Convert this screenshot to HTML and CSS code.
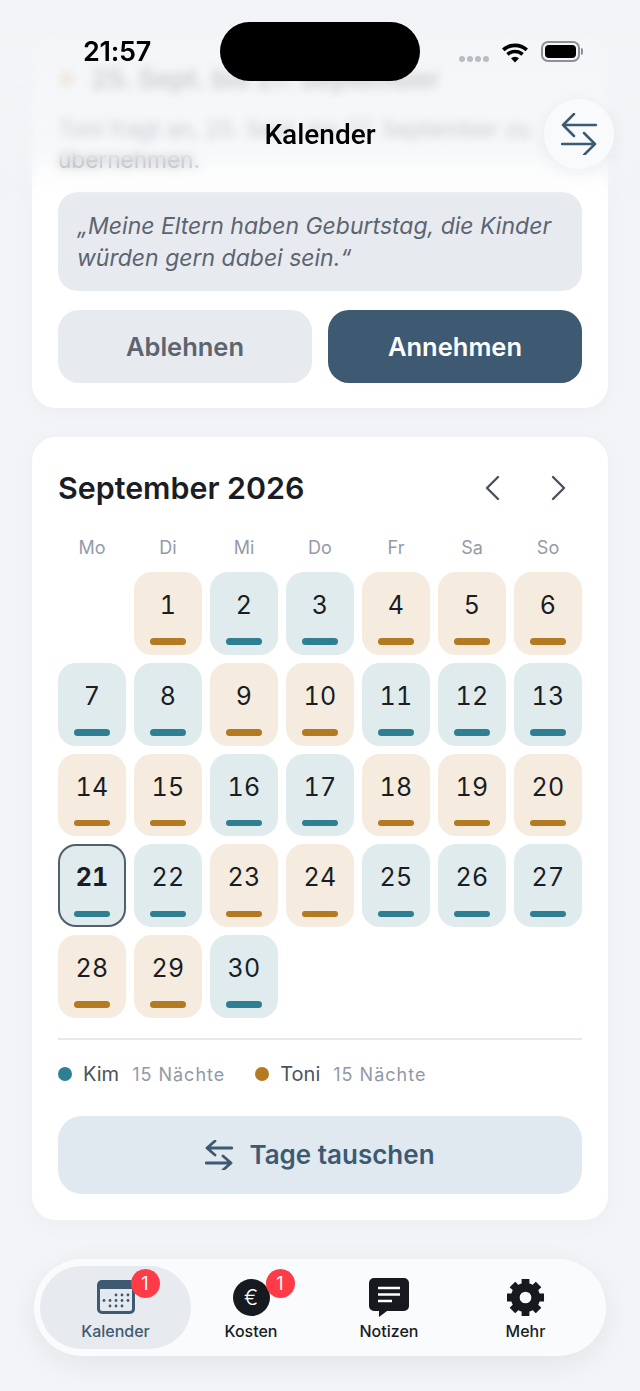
FILE: index.html
```html
<!DOCTYPE html>
<html lang="de">
<head>
<meta charset="utf-8">
<title>Kalender</title>
<link rel="stylesheet" href="styles.css">
</head>
<body>
<main class="page">
  <section class="card request">
    <h2 class="req-title"><span class="req-dot"></span>25. Sept. bis 27. September</h2>
    <p class="req-text">Toni fragt an, 25. Sept. bis 27. September zu übernehmen.</p>
    <blockquote class="quote">„Meine Eltern haben Geburtstag, die Kinder würden gern dabei sein.“</blockquote>
    <div class="actions">
      <button class="btn btn-muted">Ablehnen</button>
      <button class="btn btn-primary">Annehmen</button>
    </div>
  </section>

  <section class="card calendar">
    <header class="cal-head">
      <h1 class="cal-title">September 2026</h1>
      <div class="cal-nav">
        <svg width="18" height="26" viewBox="0 0 18 26"><path d="M15 2 4 13l11 11" class="chev"/></svg>
        <svg width="18" height="26" viewBox="0 0 18 26"><path d="M3 2l11 11L3 24" class="chev"/></svg>
      </div>
    </header>
    <div class="grid weekdays">
      <span>Mo</span><span>Di</span><span>Mi</span><span>Do</span><span>Fr</span><span>Sa</span><span>So</span>
    </div>
    <div class="grid days">
      <span></span>
      <div class="day toni">1</div><div class="day kim">2</div><div class="day kim">3</div><div class="day toni">4</div><div class="day toni">5</div><div class="day toni">6</div>
      <div class="day kim">7</div><div class="day kim">8</div><div class="day toni">9</div><div class="day toni">10</div><div class="day kim">11</div><div class="day kim">12</div><div class="day kim">13</div>
      <div class="day toni">14</div><div class="day toni">15</div><div class="day kim">16</div><div class="day kim">17</div><div class="day toni">18</div><div class="day toni">19</div><div class="day toni">20</div>
      <div class="day kim today">21</div><div class="day kim">22</div><div class="day toni">23</div><div class="day toni">24</div><div class="day kim">25</div><div class="day kim">26</div><div class="day kim">27</div>
      <div class="day toni">28</div><div class="day toni">29</div><div class="day kim">30</div>
    </div>
    <div class="legend">
      <span class="legend-dot kim-dot"></span><span class="legend-name">Kim</span><span class="legend-count">15 Nächte</span>
      <span class="legend-dot toni-dot second"></span><span class="legend-name">Toni</span><span class="legend-count">15 Nächte</span>
    </div>
    <button class="swap-btn">
      <svg class="swap-icon" width="28" height="30" viewBox="0 0 28 30"><path d="M2 8h25M10 1 2 8l8 7M26 23H1M18 16l8 7-8 7" class="swap-path"/></svg>
      Tage tauschen
    </button>
  </section>
</main>

<div class="top-fade"></div>

<div class="statusbar">
  <span class="time">21:57</span>
  <span class="island"></span>
  <span class="signal"><i></i><i></i><i></i><i></i></span>
  <svg class="wifi" width="26" height="20" viewBox="0 0 26 20"><path d="M13 19.5 9 15.2a6 6 0 0 1 8 0zM6.6 12.7 4.2 10.1a13 13 0 0 1 17.6 0l-2.4 2.6a9.5 9.5 0 0 0-12.8 0zM2.5 8.3 0 5.6a19 19 0 0 1 26 0l-2.5 2.7a15.4 15.4 0 0 0-21 0z"/></svg>
  <span class="battery"><span class="battery-fill"></span></span>
</div>

<div class="titlebar">Kalender</div>
<button class="float-swap" aria-label="Tauschen">
  <svg width="36" height="42" viewBox="0 0 36 42"><path d="M2 12h33M13 1 2 12l11 11M34 31H1M23 20l11 11-11 11" class="swap-path thin"/></svg>
</button>

<nav class="tabbar">
  <a class="tab active">
    <span class="tab-icon">
      <svg width="38" height="34" viewBox="0 0 38 34">
        <rect x="1.5" y="1.5" width="35" height="31" rx="3.5" fill="#e3e9ef" stroke="#3e5a72" stroke-width="3"/>
        <path d="M1.500 5a3.500 3.500 0 0 1 3.500-3.500h28a3.500 3.500 0 0 1 3.500 3.500v4h-35z" fill="#3e5a72"/>
        <g fill="#3e5a72">
          <circle cx="19" cy="15" r="1.400"/><circle cx="25" cy="15" r="1.400"/><circle cx="31" cy="15" r="1.400"/>
          <circle cx="7" cy="20.500" r="1.400"/><circle cx="13" cy="20.500" r="1.400"/><circle cx="19" cy="20.500" r="1.400"/><circle cx="25" cy="20.500" r="1.400"/><circle cx="31" cy="20.500" r="1.400"/>
          <circle cx="13" cy="26" r="1.400"/><circle cx="19" cy="26" r="1.400"/><circle cx="25" cy="26" r="1.400"/>
        </g>
      </svg>
      <b class="badge">1</b>
    </span>
    <span class="tab-label">Kalender</span>
  </a>
  <a class="tab">
    <span class="tab-icon"><span class="euro">€</span><b class="badge">1</b></span>
    <span class="tab-label">Kosten</span>
  </a>
  <a class="tab">
    <span class="tab-icon">
      <svg width="40" height="39" viewBox="0 0 40 39">
        <path d="M5 0h30a5 5 0 0 1 5 5v23a5 5 0 0 1-5 5H18l-8 6v-6H5a5 5 0 0 1-5-5V5a5 5 0 0 1 5-5z" fill="#16191d"/>
        <path d="M9 10h22M9 16.500h22M9 23h14" stroke="#fff" stroke-width="2.600" fill="none"/>
      </svg>
    </span>
    <span class="tab-label">Notizen</span>
  </a>
  <a class="tab">
    <span class="tab-icon">
      <svg width="39" height="39" viewBox="0 0 40 40">
        <circle cx="20" cy="20" r="10.500" fill="none" stroke="#16191d" stroke-width="9"/>
        <g stroke="#16191d" stroke-width="8" stroke-linecap="butt">
          <path d="M20 1v38M1 20h38M6.600 6.600l26.800 26.800M33.400 6.600 6.600 33.400" stroke-dasharray="6 26 6"/>
        </g>
      </svg>
    </span>
    <span class="tab-label">Mehr</span>
  </a>
</nav>
</body>
</html>
```
FILE: styles.css
```css
* { box-sizing: border-box; }
html, body { margin: 0; height: 1391px; overflow: hidden; }
body {
  background: #f2f4f7;
  font-family: Inter, "Liberation Sans", sans-serif;
  color: #1a1d23;
  position: relative;
}
.page { display: flex; flex-direction: column; gap: 29px; padding: 37px 32px 0; }
.card {
  background: #fff;
  border-radius: 24px;
  padding: 26px;
  box-shadow: 0 4px 24px rgba(30, 40, 60, 0.03);
}
.request { height: 371px; }
.req-title {
  display: flex; align-items: center; gap: 18px;
  margin: 0 0 20px 2px; font-size: 26.5px; line-height: 30px; font-weight: 600; color: #20242b;
}
.req-dot { width: 13px; height: 13px; border-radius: 50%; background: #d29a45; }
.req-text { margin: 0 0 17px; font-size: 22.600px; line-height: 31px; color: #5d6470; }
.quote {
  margin: 0 0 19px; padding: 18px 19px; height: 99px;
  background: #e7ebef; border-radius: 20px;
  font-size: 23px; line-height: 32px; font-style: italic; color: #5d6470;
}
.actions { display: flex; gap: 16px; }
.btn {
  flex: 1; height: 73px; border: 0; border-radius: 21px;
  font: 600 25.500px Inter, sans-serif;
}
.btn-muted { background: #e7ebef; color: #5d6470; }
.btn-primary { background: #3e5a72; color: #fff; }

.calendar { height: 783px; padding-top: 30px; }
.cal-head { display: flex; justify-content: space-between; align-items: center; height: 42px; }
.cal-title { margin: 0; font-size: 30.400px; line-height: 42px; font-weight: 600; color: #1a1d23; }
.cal-nav { display: flex; gap: 49px; margin-right: 14px; }
.chev { fill: none; stroke: #4a5260; stroke-width: 2.4; stroke-linecap: round; stroke-linejoin: round; }
.grid { display: grid; grid-template-columns: repeat(7, 68px); column-gap: 8px; }
.weekdays {
  margin-top: 26px; height: 26px; line-height: 26px; text-align: center;
  font-size: 18px; font-weight: 400; color: #949ba8;
}
.days { margin-top: 11px; grid-auto-rows: 82.750px; row-gap: 8px; }
.day {
  position: relative; border-radius: 18px;
  padding-top: 17px; text-align: center;
  font-size: 25px; line-height: 32px; font-weight: 400; color: #1a1d23;
  font-variant-numeric: tabular-nums; letter-spacing: 0.2px;
}
.day::after {
  content: ""; position: absolute; left: 16px; right: 16px; bottom: 10px;
  height: 6.500px; border-radius: 4px;
}
.kim { background: #e0ebee; }
.kim::after { background: #2f7f93; }
.toni { background: #f5ecdf; }
.toni::after { background: #b47a22; }
.today { font-weight: 700; box-shadow: inset 0 0 0 2px #545f6e; }

.legend {
  display: flex; align-items: center; height: 71px; margin-top: 20px;
  border-top: 2px solid #e6e9ee; padding-bottom: 0;
}
.legend-dot { width: 14px; height: 14px; border-radius: 50%; margin-right: 11px; }
.kim-dot { background: #2f7f93; }
.toni-dot { background: #b47a22; }
.second { margin-left: 30px; }
.legend-name { font-size: 20px; color: #4b5260; margin-right: 13px; }
.legend-count { font-size: 18px; color: #9299a5; letter-spacing: 1px; }
.swap-btn {
  display: flex; align-items: center; justify-content: center; gap: 16px;
  width: 100%; height: 78px; margin-top: 7px; border: 0; border-radius: 24px;
  background: #e0e8f0; color: #3e5a72;
  font: 600 26px Inter, sans-serif;
}
.swap-path { fill: none; stroke: #3e5a72; stroke-width: 2.800; stroke-linecap: round; stroke-linejoin: round; }
.swap-path.thin { stroke-width: 2.500; }

.top-fade {
  position: absolute; left: 0; right: 0; top: 0; height: 205px;
  background: linear-gradient(#f2f4f7f2 0, #f2f4f7c4 50%, #f2f4f7a8 76%, #f2f4f700 100%);
  backdrop-filter: blur(5px);
  -webkit-mask-image: linear-gradient(#000 72%, transparent 100%);
  mask-image: linear-gradient(#000 72%, transparent 100%);
}
.statusbar { position: absolute; left: 0; right: 0; top: 0; height: 90px; }
.time {
  position: absolute; left: 83px; top: 36px;
  font: 600 27px/32px Inter, sans-serif; color: #000; letter-spacing: -0.3px;
}
.island { position: absolute; left: 220px; top: 22px; width: 200px; height: 59px; border-radius: 30px; background: #000; }
.signal { position: absolute; left: 459px; top: 56px; display: flex; gap: 2px; }
.signal i { width: 6px; height: 6px; border-radius: 50%; background: #b9bcc1; }
.wifi { position: absolute; left: 502px; top: 43px; }
.battery {
  position: absolute; left: 541px; top: 41px; width: 39px; height: 21px;
  border: 2px solid #8d9095; border-radius: 7px; padding: 2px;
}
.battery::after {
  content: ""; position: absolute; right: -5px; top: 5px; width: 2px; height: 7px;
  background: #8d9095; border-radius: 0 2px 2px 0;
}
.battery-fill { display: block; height: 100%; background: #000; border-radius: 4px; }
.titlebar {
  position: absolute; left: 0; right: 0; top: 119px; text-align: center;
  font: 500 28px/32px Roboto, Inter, sans-serif; color: #000;
}
.float-swap {
  position: absolute; left: 544px; top: 99px; width: 70px; height: 70px; padding: 0;
  border: 0; border-radius: 50%; background: #f8fafc;
  display: flex; align-items: center; justify-content: center;
  box-shadow: 0 4px 18px rgba(30, 40, 60, 0.06);
}

.tabbar {
  position: absolute; left: 34px; top: 1259px; width: 572px; height: 97px;
  padding: 7px 6px; border-radius: 48px; background: #f9fbfd;
  display: grid; grid-template-columns: 151px 120px 156px 117px;
  box-shadow: 0 8px 30px rgba(30, 40, 60, 0.07);
}
.tab { display: flex; flex-direction: column; align-items: center; border-radius: 42px; padding-top: 11px; }
.tab.active { background: #e7eaee; }
.tab-icon { position: relative; height: 40px; display: flex; align-items: center; justify-content: center; }
.tab-label {
  margin-top: 4px; font-size: 16px; line-height: 20px; font-weight: 500; color: #1a1d23;
}
.active .tab-label { color: #3e5a72; }
.euro {
  width: 37px; height: 37px; border-radius: 50%; background: #16191d; color: #fff;
  display: flex; align-items: center; justify-content: center;
  font-size: 21px; font-weight: 300;
}
.badge {
  position: absolute; left: calc(100% - 3px); top: -8px; margin-left: -1px;
  width: 29px; height: 29px; border-radius: 50%; background: #ff3b47;
  display: flex; align-items: center; justify-content: center;
  font-size: 18px; font-weight: 400; color: #fff;
}
```
